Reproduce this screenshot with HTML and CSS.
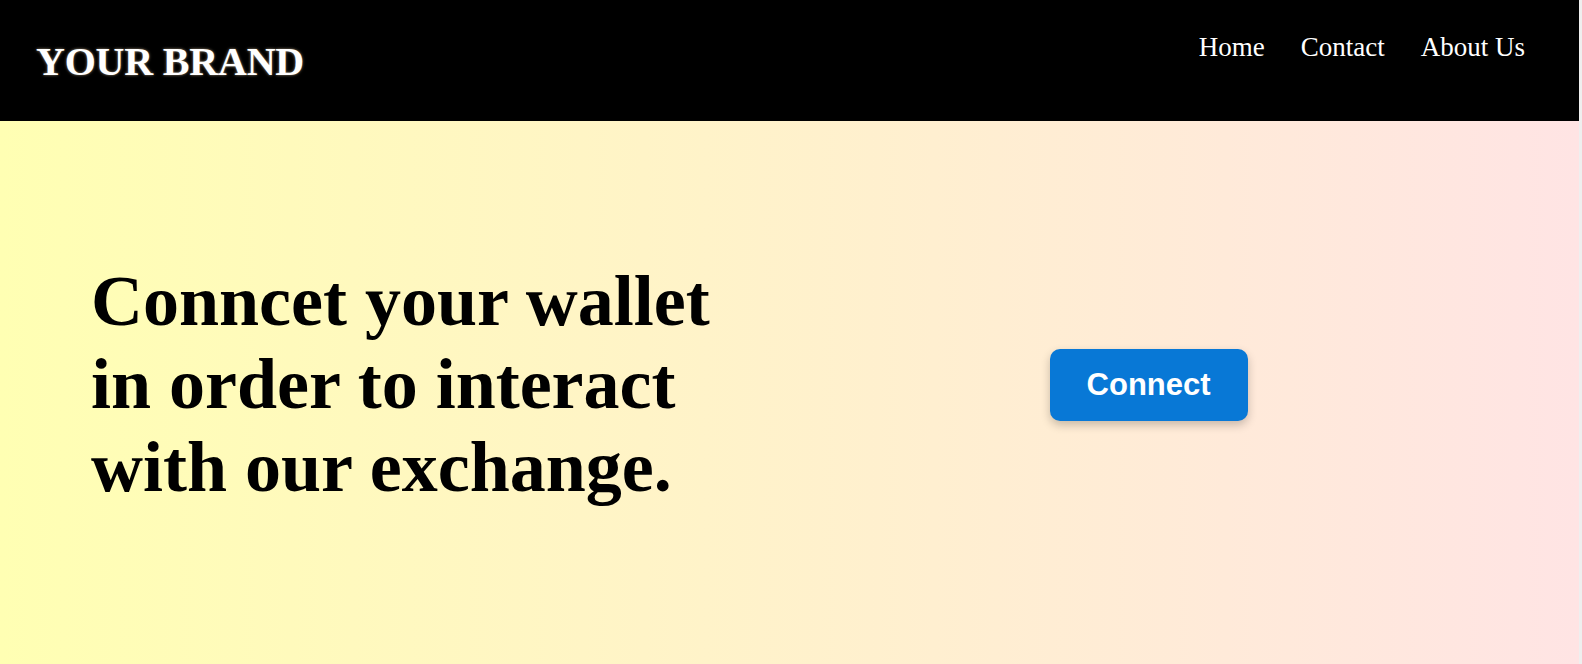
FILE: index.html
```html
<!DOCTYPE html>
<html lang="en">
<head>
<meta charset="utf-8">
<title>Your Brand</title>
<link rel="stylesheet" href="styles.css">
</head>
<body>
<div class="page">
  <header class="topbar">
    <div class="brand">YOUR BRAND</div>
    <nav class="nav">
      <a href="#" class="nav-link">Home</a>
      <a href="#" class="nav-link">Contact</a>
      <a href="#" class="nav-link">About Us</a>
    </nav>
  </header>
  <main class="hero">
    <h1 class="hero-title">Conncet your wallet<br>in order to interact<br>with our exchange.</h1>
    <button class="connect-btn" type="button">Connect</button>
  </main>
</div>
</body>
</html>
```

FILE: styles.css
```css
html {
  background: #efefef;
  height: 100%;
}

body {
  margin: 0 3px 0 0;
  height: 100%;
  font-family: "Liberation Serif", "Times New Roman", serif;
}

.page {
  display: flex;
  flex-direction: column;
  height: 100%;
}

.topbar {
  height: 121px;
  box-sizing: border-box;
  background: #000;
  display: flex;
  justify-content: space-between;
  align-items: flex-start;
  padding: 32px 54px 0 36px;
  flex-shrink: 0;
}

.brand {
  margin-top: 6px;
  font-family: "Liberation Serif", "Times New Roman", serif;
  font-weight: 700;
  font-size: 40px;
  color: #fff;
  letter-spacing: -0.2px;
  text-shadow: 0 0 3px rgba(255, 230, 190, 0.6);
}

.nav {
  display: flex;
  gap: 36px;
}

.nav-link {
  color: #fff;
  text-decoration: none;
  font-size: 27px;
}

.hero {
  flex: 1;
  display: flex;
  align-items: center;
  padding: 0 0 16px 91px;
  background: linear-gradient(to right, #ffffb3, #ffe4e4);
}

.hero-title {
  margin: 0;
  font-family: "Liberation Serif", "Times New Roman", serif;
  font-weight: 700;
  font-size: 72px;
  color: #000;
}

.connect-btn {
  margin-left: 340px;
  width: 198px;
  height: 72px;
  border: none;
  border-radius: 10px;
  background: #0878d6;
  color: #fff;
  font-family: "Liberation Sans", Arial, sans-serif;
  font-weight: 700;
  font-size: 31px;
  box-shadow: 0 4px 10px rgba(0, 0, 0, 0.22);
  cursor: pointer;
}
```
